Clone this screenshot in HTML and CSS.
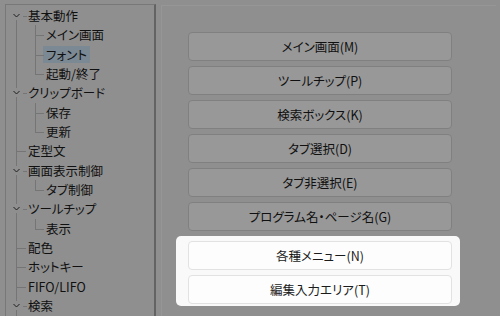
FILE: index.html
```html
<!DOCTYPE html>
<html lang="ja">
<head>
    <meta charset="UTF-8">
    <meta name="viewport" content="width=device-width, initial-scale=1.0">
    <title>設定 - 配色</title>
    <link rel="stylesheet" href="styles.css">
</head>
<body>
    <div class="window">
        <div class="tree">
            <ul class="root">
                <li class="open">
                    <div class="row"><span class="chev"><svg width="9" height="9" viewBox="0 0 9 9"><polyline points="1.5,3 4.5,6 7.5,3" fill="none" stroke="#333" stroke-width="1"/></svg></span><span class="label">基本動作</span></div>
                    <ul class="children">
                        <li><div class="row"><span class="label">メイン画面</span></div></li>
                        <li><div class="row"><span class="label selected">フォント</span></div></li>
                        <li><div class="row"><span class="label">起動/終了</span></div></li>
                    </ul>
                </li>
                <li class="open">
                    <div class="row"><span class="chev"><svg width="9" height="9" viewBox="0 0 9 9"><polyline points="1.5,3 4.5,6 7.5,3" fill="none" stroke="#333" stroke-width="1"/></svg></span><span class="label">クリップボード</span></div>
                    <ul class="children">
                        <li><div class="row"><span class="label">保存</span></div></li>
                        <li><div class="row"><span class="label">更新</span></div></li>
                    </ul>
                </li>
                <li class="leaf"><div class="row"><span class="label">定型文</span></div></li>
                <li class="open">
                    <div class="row"><span class="chev"><svg width="9" height="9" viewBox="0 0 9 9"><polyline points="1.5,3 4.5,6 7.5,3" fill="none" stroke="#333" stroke-width="1"/></svg></span><span class="label">画面表示制御</span></div>
                    <ul class="children">
                        <li><div class="row"><span class="label">タブ制御</span></div></li>
                    </ul>
                </li>
                <li class="open">
                    <div class="row"><span class="chev"><svg width="9" height="9" viewBox="0 0 9 9"><polyline points="1.5,3 4.5,6 7.5,3" fill="none" stroke="#333" stroke-width="1"/></svg></span><span class="label">ツールチップ</span></div>
                    <ul class="children">
                        <li><div class="row"><span class="label">表示</span></div></li>
                    </ul>
                </li>
                <li class="leaf"><div class="row"><span class="label">配色</span></div></li>
                <li class="leaf"><div class="row"><span class="label">ホットキー</span></div></li>
                <li class="leaf"><div class="row"><span class="label">FIFO/LIFO</span></div></li>
                <li class="open">
                    <div class="row"><span class="chev"><svg width="9" height="9" viewBox="0 0 9 9"><polyline points="1.5,3 4.5,6 7.5,3" fill="none" stroke="#333" stroke-width="1"/></svg></span><span class="label">検索</span></div>
                </li>
            </ul>
        </div>

        <div class="content">
            <button class="item">メイン画面(M)</button>
            <button class="item">ツールチップ(P)</button>
            <button class="item">検索ボックス(K)</button>
            <button class="item">タブ選択(D)</button>
            <button class="item">タブ非選択(E)</button>
            <button class="item">プログラム名・ページ名(G)</button>
            <div class="spotlight">
                <button class="item">各種メニュー(N)</button>
                <button class="item">編集入力エリア(T)</button>
            </div>
        </div>
    </div>
</body>
</html>
```

FILE: styles.css
```css
body {
    font-family: "Noto Sans CJK JP", sans-serif;
    font-size: 12.5px;
    font-feature-settings: "palt";
    color: #1b1b1b;
    background-color: #eeeeee;
    margin: 0;
    height: 316px;
    overflow: hidden;
}
.window {
    display: flex;
    padding: 4px 0 0 5px;
    height: 312px;
}
.tree {
    width: 148px;
    border: 1px solid #c8c8c8;
    border-right: 2px solid #a6a6a6;
    border-bottom: none;
    padding-top: 1px;
    overflow: hidden;
}
.tree ul {
    list-style: none;
    margin: 0;
    padding: 0;
}
.tree li {
    position: relative;
}
.root {
    position: relative;
}
.root::before {
    content: "";
    position: absolute;
    left: 10px;
    top: 14px;
    bottom: -40px;
    border-left: 1px solid #c4c4c4;
}
.row {
    display: flex;
    align-items: center;
    height: 19.33px;
    padding-left: 19px;
    position: relative;
}
.children .row {
    padding-left: 37px;
}
.label {
    padding: 0 3px;
    line-height: 17px;
    white-space: nowrap;
}
.selected {
    background-color: #cde4f7;
}
.chev {
    position: absolute;
    left: 6px;
    top: 5px;
    width: 9px;
    height: 9px;
    background-color: #eeeeee;
    display: flex;
}
/* small tick between chevron and text */
.open > .row::after {
    content: "";
    position: absolute;
    left: 17px;
    top: 10px;
    width: 4px;
    border-top: 1px solid #c4c4c4;
}
.leaf > .row::after {
    content: "";
    position: absolute;
    left: 10px;
    top: 10px;
    width: 10px;
    border-top: 1px solid #c4c4c4;
}
.children li::before {
    content: "";
    position: absolute;
    left: 29px;
    top: 0;
    height: 100%;
    border-left: 1px solid #c4c4c4;
}
.children li:last-child::before {
    height: 10px;
}
.children li::after {
    content: "";
    position: absolute;
    left: 29px;
    top: 10px;
    width: 9px;
    border-top: 1px solid #c4c4c4;
}
.content {
    flex: 1;
    margin: 1px 4px 0 5px;
    border-left: 1px solid #fbfbfb;
    border-top: 1px solid #fbfbfb;
    padding: 26px 0 0 26px;
    display: flex;
    flex-direction: column;
    gap: 5px;
}
.item {
    width: 264px;
    height: 29px;
    font-family: inherit;
    font-size: 12.5px;
    font-feature-settings: "palt";
    color: #1b1b1b;
    background-color: #fdfdfd;
    border: 1px solid #d6d6d6;
    border-radius: 4px;
    padding: 0;
}
.spotlight {
    position: relative;
    z-index: 1;
    display: flex;
    flex-direction: column;
    gap: 5px;
    width: 263px;
    margin: 0 0 0 -12px;
    padding: 5px 9px 2px 12px;
    background-color: #f9f9f9;
    border-radius: 5px;
    box-shadow: 0 0 0 2000px rgba(0, 0, 0, 0.4);
}
.spotlight .item {
    border-color: #e2e2e2;
}
```
